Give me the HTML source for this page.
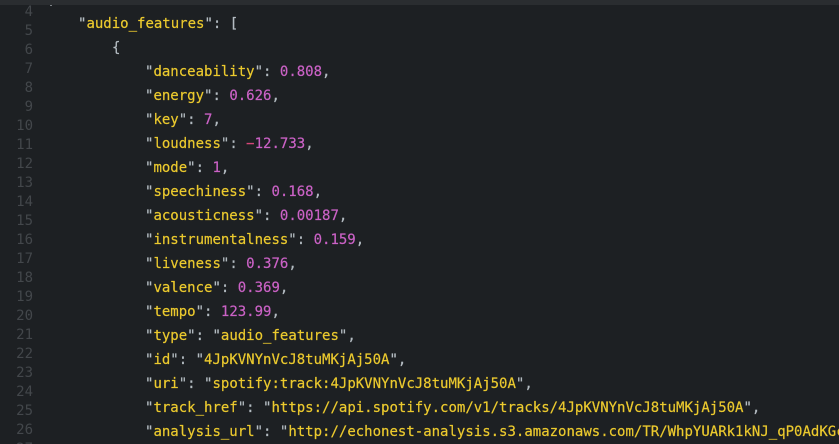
<!DOCTYPE html>
<html><head><meta charset="utf-8">
<style>
html,body{margin:0;padding:0;width:839px;height:444px;overflow:hidden;background:#1d2023}
#w{position:fixed;left:0;top:0;width:839px;height:444px;overflow:hidden;background:#1d2023;contain:paint}
#bar{position:absolute;left:0;top:0;width:839px;height:5px;background:#2a2d30}
#c{position:absolute;left:50px;top:5px;width:2px;height:1px;background:#7c8286}
.n,.l{position:absolute;font-family:"DejaVu Sans Mono",monospace;font-size:14px;line-height:20px;white-space:pre}
.n{left:0;width:33px;text-align:right;color:#43474b}
.l{left:145px;color:#ecca2e;-webkit-text-stroke:0.2px currentColor}
.q,.p{color:#b4bcc2}.v{color:#cb62c6}.m{color:#d9487a}
</style></head><body><div id="w">
<div id="bar"></div>
<div id="c"></div>
<div class="n" style="top:2px">4</div>
<div class="n" style="top:21px">5</div>
<div class="n" style="top:40px">6</div>
<div class="n" style="top:59px">7</div>
<div class="n" style="top:78px">8</div>
<div class="n" style="top:97px">9</div>
<div class="n" style="top:116px">10</div>
<div class="n" style="top:135px">11</div>
<div class="n" style="top:154px">12</div>
<div class="n" style="top:173px">13</div>
<div class="n" style="top:192px">14</div>
<div class="n" style="top:211px">15</div>
<div class="n" style="top:230px">16</div>
<div class="n" style="top:249px">17</div>
<div class="n" style="top:268px">18</div>
<div class="n" style="top:287px">19</div>
<div class="n" style="top:306px">20</div>
<div class="n" style="top:325px">21</div>
<div class="n" style="top:344px">22</div>
<div class="n" style="top:363px">23</div>
<div class="n" style="top:382px">24</div>
<div class="n" style="top:401px">25</div>
<div class="n" style="top:420px">26</div>
<div class="n" style="top:439px">27</div>
<div class="l" style="left:78px;top:14px"><span class="q">"</span>audio_features<span class="q">"</span><span class="p">: [</span></div>
<div class="l" style="left:112px;top:38px"><span class="p">{</span></div>
<div class="l" style="top:62px"><span class="q">"</span>danceability<span class="q">"</span><span class="p">: </span><span class="v">0.808</span><span class="p">,</span></div>
<div class="l" style="top:86px"><span class="q">"</span>energy<span class="q">"</span><span class="p">: </span><span class="v">0.626</span><span class="p">,</span></div>
<div class="l" style="top:110px"><span class="q">"</span>key<span class="q">"</span><span class="p">: </span><span class="v">7</span><span class="p">,</span></div>
<div class="l" style="top:134px"><span class="q">"</span>loudness<span class="q">"</span><span class="p">: </span><span class="m">−</span><span class="v">12.733</span><span class="p">,</span></div>
<div class="l" style="top:158px"><span class="q">"</span>mode<span class="q">"</span><span class="p">: </span><span class="v">1</span><span class="p">,</span></div>
<div class="l" style="top:182px"><span class="q">"</span>speechiness<span class="q">"</span><span class="p">: </span><span class="v">0.168</span><span class="p">,</span></div>
<div class="l" style="top:206px"><span class="q">"</span>acousticness<span class="q">"</span><span class="p">: </span><span class="v">0.00187</span><span class="p">,</span></div>
<div class="l" style="top:230px"><span class="q">"</span>instrumentalness<span class="q">"</span><span class="p">: </span><span class="v">0.159</span><span class="p">,</span></div>
<div class="l" style="top:254px"><span class="q">"</span>liveness<span class="q">"</span><span class="p">: </span><span class="v">0.376</span><span class="p">,</span></div>
<div class="l" style="top:278px"><span class="q">"</span>valence<span class="q">"</span><span class="p">: </span><span class="v">0.369</span><span class="p">,</span></div>
<div class="l" style="top:302px"><span class="q">"</span>tempo<span class="q">"</span><span class="p">: </span><span class="v">123.99</span><span class="p">,</span></div>
<div class="l" style="top:326px"><span class="q">"</span>type<span class="q">"</span><span class="p">: </span><span class="q">"</span>audio_features<span class="q">"</span><span class="p">,</span></div>
<div class="l" style="top:350px"><span class="q">"</span>id<span class="q">"</span><span class="p">: </span><span class="q">"</span>4JpKVNYnVcJ8tuMKjAj50A<span class="q">"</span><span class="p">,</span></div>
<div class="l" style="top:374px"><span class="q">"</span>uri<span class="q">"</span><span class="p">: </span><span class="q">"</span>spotify:track:4JpKVNYnVcJ8tuMKjAj50A<span class="q">"</span><span class="p">,</span></div>
<div class="l" style="top:398px"><span class="q">"</span>track_href<span class="q">"</span><span class="p">: </span><span class="q">"</span>https://api.spotify.com/v1/tracks/4JpKVNYnVcJ8tuMKjAj50A<span class="q">"</span><span class="p">,</span></div>
<div class="l" style="top:422px;width:694px;overflow:hidden"><span class="q">"</span>analysis_url<span class="q">"</span><span class="p">: </span><span class="q">"</span>http://echonest-analysis.s3.amazonaws.com/TR/WhpYUARk1kNJ_qP0AdKGcD</div>
</div></body></html>
